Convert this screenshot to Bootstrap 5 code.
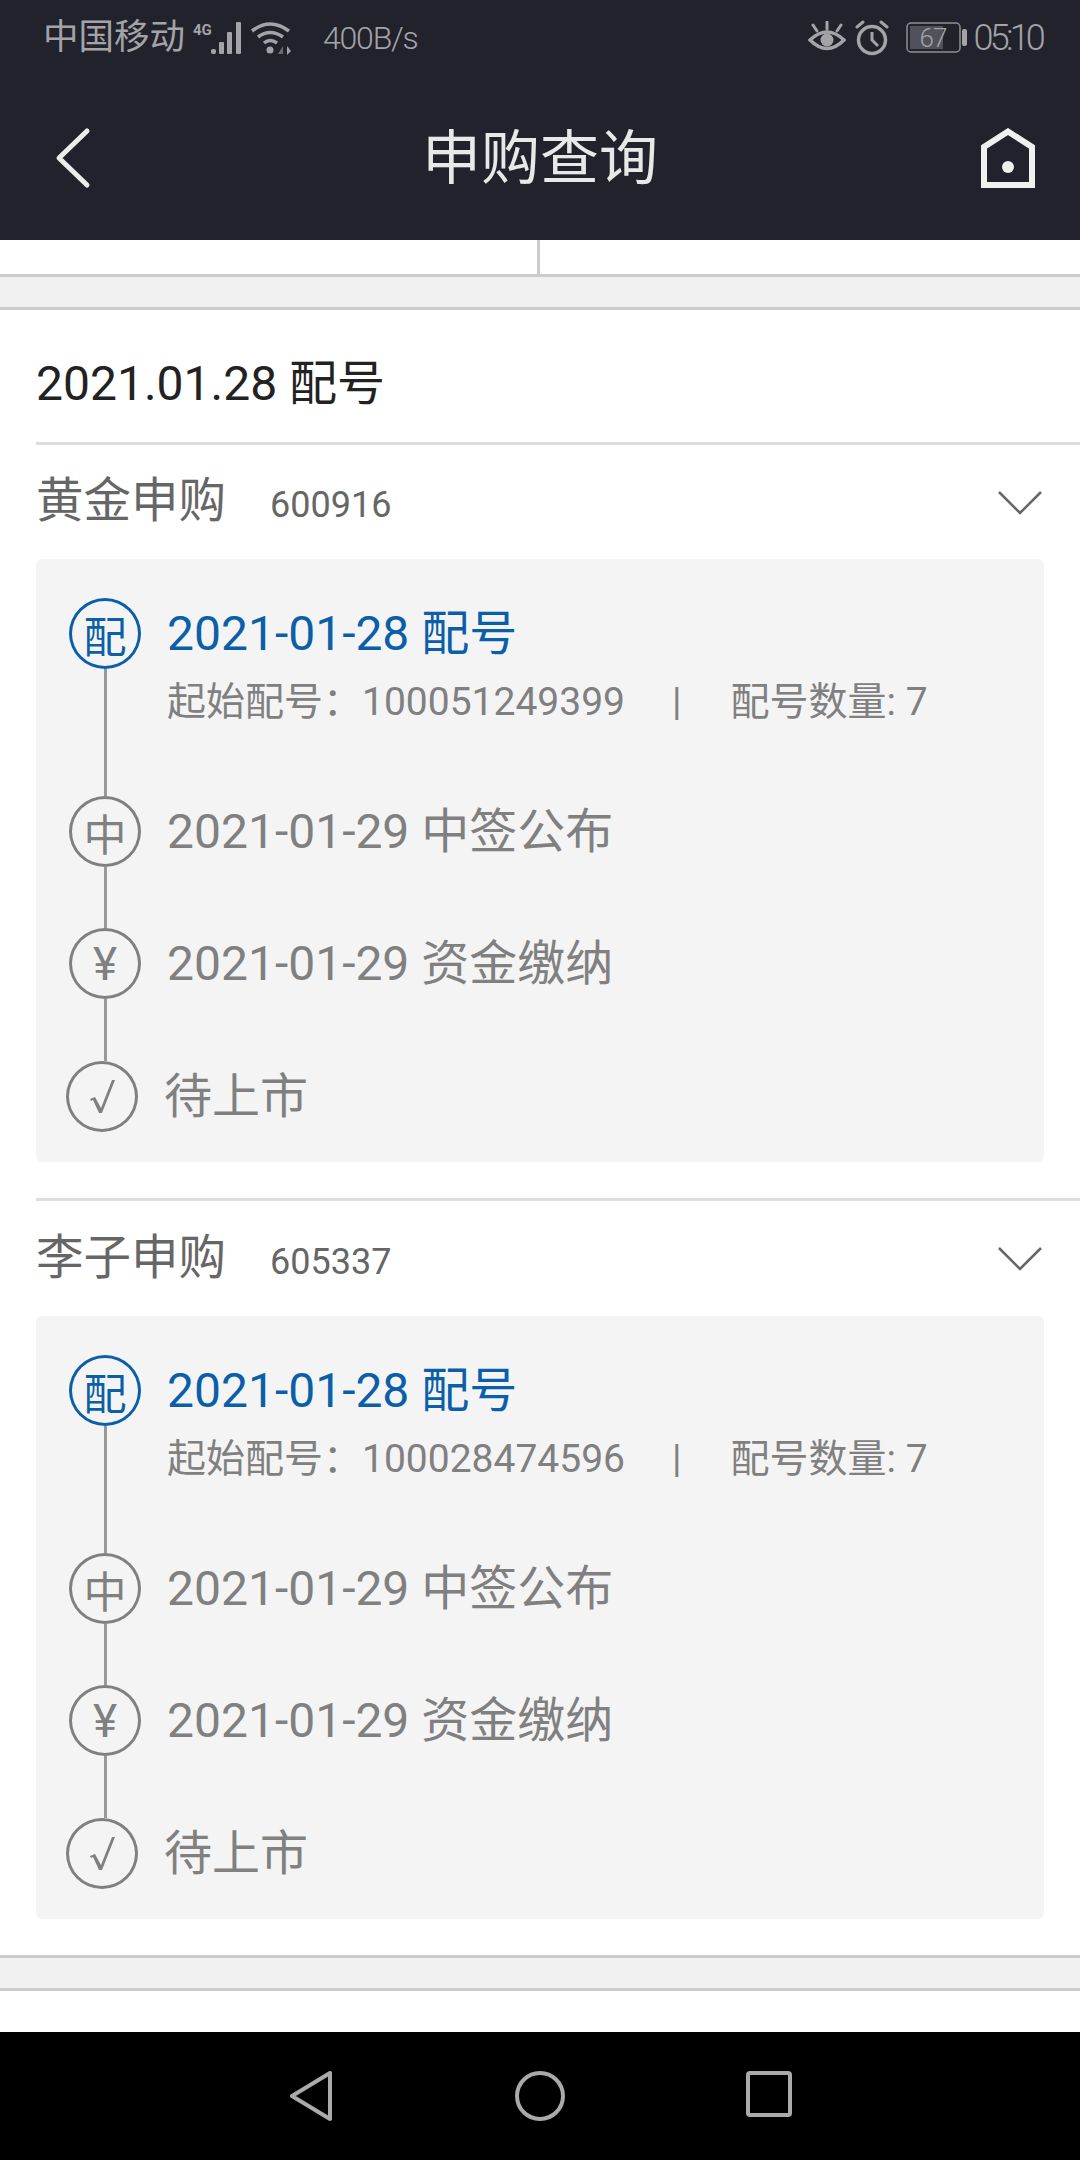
<!DOCTYPE html>
<html lang="zh-CN">
<head>
    <meta charset="UTF-8">
    <meta name="viewport" content="width=device-width, initial-scale=1.0">
    <title>申购查询</title>
    <link rel="stylesheet" href="https://cdn.jsdelivr.net/npm/bootstrap@5.3.0/dist/css/bootstrap.min.css">
    <style>
        body { width: 1080px; height: 2160px; overflow: hidden; background: #fff; font-family: Roboto, "Noto Sans CJK SC", sans-serif; }
        .app-top { height: 240px; background: #21222c; }
        .status-row { height: 75px; padding: 0 38px 0 43px; color: #a3a3a8; }
        .carrier { font-size: 35.5px; line-height: 1; }
        .speed { font-size: 32px; letter-spacing: -1.2px; margin-left: 31px; font-weight: 300; }
        .clock { font-size: 36px; letter-spacing: -3.8px; font-weight: 300; margin-left: 6px; }
        .title-row { height: 165px; padding: 0 45px; }
        .back-slot { width: 54px; padding-left: 10px; }
        .page-title { font-size: 59px; color: #e8e8e8; line-height: 1; margin-top: 2px; }
        .tab-strip { height: 37px; border-bottom: 3px solid #ccc; }
        .tab-strip > div { width: 540px; height: 34px; border-right: 3px solid #ccc; }
        .band { height: 33px; background: #f1f1f1; border-bottom: 3px solid #ccc; }
        .sheet-head { height: 132px; padding: 16px 36px 0; font-size: 48px; color: #222; line-height: 1; }
        .ipo { margin-left: 36px; border-top: 3px solid #ddd; padding-bottom: 36px; }
        .ipo-head { height: 114px; padding: 0 38px 0 0; }
        .ipo-last .ipo-head { height: 115px; }
        .ipo-name { font-size: 47.5px; color: #666; line-height: 1; }
        .ipo-code { font-size: 36px; color: #666; margin-left: 44px; line-height: 1; margin-top: 6px; }
        .track { width: 1008px; background: #f4f4f4; border-radius: 6px; padding: 39px 33px 30px; }
        .step { display: flex; }
        .step-last { margin-left: -3px; }
        .marker { width: 72px; display: flex; flex-direction: column; align-items: center; flex: none; }
        .dot { width: 72px; height: 71px; border: 3px solid #808080; border-radius: 50%; color: #808080; font-size: 43px; line-height: 62px; font-family: "Noto Sans CJK SC", sans-serif; display: flex; align-items: center; justify-content: center; }
        .dot-yen { font-size: 46px; font-family: Roboto, sans-serif; }
        .link-line { width: 3px; background: #999; }
        .link-tall { height: 127px; }
        .link-short { height: 61px; }
        .link-long { height: 62px; }
        .step-body { margin-left: 26px; color: #808080; }
        .step-title { font-size: 48px; line-height: 71px; }
        .step-sub { font-size: 39px; line-height: 66px; }
        .step-sub .sep { margin: 0 49px 0 47px; }
        .step-on .dot { border-color: #0b5fa9; color: #0b5fa9; }
        .step-on .step-title { color: #0b5fa9; }
        .band-end { height: 36px; background: #f1f1f1; border-top: 3px solid #ccc; border-bottom: 3px solid #ccc; }
        .sys-nav { height: 128px; background: #000; padding-top: 39px; }
        .sys-slot { width: 229px; display: flex; justify-content: center; }
    </style>
</head>
<body>
    <div class="d-flex flex-column" style="height:2160px">
        <div class="app-top">
            <div class="status-row d-flex align-items-center">
                <span class="carrier">中国移动</span>
                <svg class="ms-2" width="53" height="36" viewBox="0 0 53 36">
                    <text x="0" y="15" font-family="Roboto" font-weight="700" font-size="15" fill="#a3a3a8">4G</text>
                    <rect x="18" y="29" width="5" height="5" rx="2" fill="#a3a3a8"/>
                    <rect x="26" y="22" width="5" height="12" rx="1" fill="#a3a3a8"/>
                    <rect x="34" y="12" width="5" height="22" rx="1" fill="#a3a3a8"/>
                    <rect x="43" y="2" width="5" height="32" rx="1" fill="#a3a3a8"/>
                </svg>
                <svg class="ms-1" width="42" height="36" viewBox="0 0 42 36" fill="none" stroke="#a3a3a8" stroke-width="3.5">
                    <path d="M2 11 Q20 -3 39 11"/>
                    <path d="M8 17 Q20 8 33 17"/>
                    <path d="M14 23 Q20 18 27 23"/>
                    <circle cx="20" cy="30" r="3.5" fill="#a3a3a8" stroke="none"/>
                    <path d="M37 26 L41 31 L37 35 Z" fill="#a3a3a8" stroke="none"/>
                    <path d="M33 26 L28 34 L33 34 Z" fill="#6a6a70" stroke="none"/>
                </svg>
                <span class="speed">400B/s</span>
                <div class="ms-auto d-flex align-items-center">
                    <svg width="38" height="34" viewBox="0 0 38 34">
                        <path d="M2 19 Q19 3 36 19 Q19 36 2 19 Z" fill="none" stroke="#a3a3a8" stroke-width="3.5"/>
                        <circle cx="19" cy="19" r="6.5" fill="#a3a3a8"/>
                        <path d="M19 1 V8 M5 4 L9 10 M33 4 L29 10" stroke="#a3a3a8" stroke-width="3" stroke-linecap="round"/>
                    </svg>
                    <svg class="ms-2" width="36" height="36" viewBox="0 0 36 36" fill="none" stroke="#a3a3a8" stroke-width="3.5">
                        <circle cx="18" cy="20" r="13.5"/>
                        <path d="M18 12 V20 L24 26" stroke-width="3"/>
                        <path d="M3 7 L9 2 M33 7 L27 2" stroke-width="3" stroke-linecap="round"/>
                    </svg>
                    <svg class="ms-3" width="62" height="32" viewBox="0 0 62 32">
                        <rect x="1" y="1" width="53" height="29" rx="4" fill="none" stroke="#8e8e94" stroke-width="1.5"/>
                        <rect x="4" y="4" width="33" height="23" fill="#50515a"/>
                        <rect x="56" y="7" width="5" height="17" rx="2" fill="#a3a3a8"/>
                        <text x="27" y="25" text-anchor="middle" font-family="Roboto" font-weight="300" font-size="26" letter-spacing="-1" fill="#a3a3a8">67</text>
                    </svg>
                    <span class="clock">05:10</span>
                </div>
            </div>
            <div class="title-row d-flex align-items-center justify-content-between">
                <div class="back-slot d-flex">
                    <svg width="36" height="62" viewBox="0 0 36 62" fill="none" stroke="#ececec" stroke-width="5" stroke-linecap="round" stroke-linejoin="round">
                        <path d="M32 4 L4 31 L32 58"/>
                    </svg>
                </div>
                <span class="page-title">申购查询</span>
                <svg width="54" height="60" viewBox="0 0 54 60" fill="none" stroke="#f0f0f0" stroke-width="6">
                    <path d="M3 57 V19 L27 3.5 L51 19 V57 Z"/>
                    <circle cx="27" cy="39" r="6" fill="#f0f0f0" stroke="none"/>
                </svg>
            </div>
        </div>

        <div class="tab-strip"><div></div></div>
        <div class="band"></div>

        <div class="sheet-head d-flex align-items-center">2021.01.28 配号</div>

        <div class="ipo">
            <div class="ipo-head d-flex align-items-center">
                <span class="ipo-name">黄金申购</span>
                <span class="ipo-code">600916</span>
                <svg class="ms-auto" width="44" height="25" viewBox="0 0 44 25" fill="none" stroke="#666" stroke-width="2.5"><path d="M1 2 L22 23 L43 2"/></svg>
            </div>
            <div class="track">
                <div class="step step-on">
                    <div class="marker"><div class="dot">配</div><div class="link-line link-tall"></div></div>
                    <div class="step-body">
                        <div class="step-title">2021-01-28 配号</div>
                        <div class="step-sub">起始配号：100051249399<span class="sep">|</span>配号数量: 7</div>
                    </div>
                </div>
                <div class="step">
                    <div class="marker"><div class="dot">中</div><div class="link-line link-short"></div></div>
                    <div class="step-body"><div class="step-title">2021-01-29 中签公布</div></div>
                </div>
                <div class="step">
                    <div class="marker"><div class="dot dot-yen">¥</div><div class="link-line link-long"></div></div>
                    <div class="step-body"><div class="step-title">2021-01-29 资金缴纳</div></div>
                </div>
                <div class="step step-last">
                    <div class="marker"><div class="dot"><svg width="25" height="34" viewBox="0 0 25 34"><path d="M0 19 L5 17 L11 28 L22 0 H25 L12 33 H9 L3 20 L1 21 Z" fill="#808080"/></svg></div></div>
                    <div class="step-body"><div class="step-title">待上市</div></div>
                </div>
            </div>
        </div>

        <div class="ipo ipo-last">
            <div class="ipo-head d-flex align-items-center">
                <span class="ipo-name">李子申购</span>
                <span class="ipo-code">605337</span>
                <svg class="ms-auto" width="44" height="25" viewBox="0 0 44 25" fill="none" stroke="#666" stroke-width="2.5"><path d="M1 2 L22 23 L43 2"/></svg>
            </div>
            <div class="track">
                <div class="step step-on">
                    <div class="marker"><div class="dot">配</div><div class="link-line link-tall"></div></div>
                    <div class="step-body">
                        <div class="step-title">2021-01-28 配号</div>
                        <div class="step-sub">起始配号：100028474596<span class="sep">|</span>配号数量: 7</div>
                    </div>
                </div>
                <div class="step">
                    <div class="marker"><div class="dot">中</div><div class="link-line link-short"></div></div>
                    <div class="step-body"><div class="step-title">2021-01-29 中签公布</div></div>
                </div>
                <div class="step">
                    <div class="marker"><div class="dot dot-yen">¥</div><div class="link-line link-long"></div></div>
                    <div class="step-body"><div class="step-title">2021-01-29 资金缴纳</div></div>
                </div>
                <div class="step step-last">
                    <div class="marker"><div class="dot"><svg width="25" height="34" viewBox="0 0 25 34"><path d="M0 19 L5 17 L11 28 L22 0 H25 L12 33 H9 L3 20 L1 21 Z" fill="#808080"/></svg></div></div>
                    <div class="step-body"><div class="step-title">待上市</div></div>
                </div>
            </div>
        </div>

        <div class="band-end"></div>
        <div class="flex-grow-1"></div>

        <div class="sys-nav d-flex justify-content-center">
            <div class="sys-slot"><svg width="44" height="50" viewBox="0 0 44 50" fill="none" stroke="#aaa" stroke-width="4" stroke-linejoin="round"><path d="M41 2 V48 L3 25 Z"/></svg></div>
            <div class="sys-slot"><svg width="50" height="50" viewBox="0 0 50 50" fill="none" stroke="#aaa" stroke-width="4"><circle cx="25" cy="25" r="23"/></svg></div>
            <div class="sys-slot"><svg width="46" height="46" viewBox="0 0 46 46" fill="none" stroke="#aaa" stroke-width="4" stroke-linejoin="round"><rect x="2" y="2" width="42" height="42" rx="2"/></svg></div>
        </div>
    </div>
</body>
</html>
